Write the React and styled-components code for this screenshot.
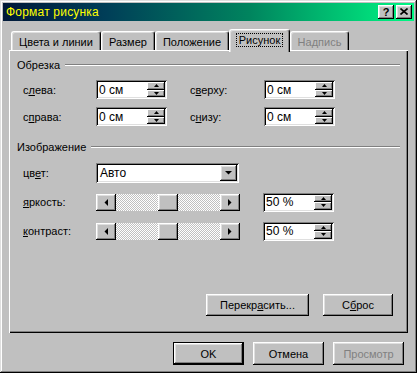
import React from "react";
import styled, { createGlobalStyle } from "styled-components";

const GlobalStyle = createGlobalStyle`
  html, body {
    margin: 0;
    padding: 0;
    background: #c0c0c0;
  }
  body {
    font-family: "Liberation Sans", Arial, sans-serif;
    font-size: 11px;
    color: #000;
  }
  * {
    box-sizing: border-box;
  }
`;

const raised = `
  background: #c0c0c0;
  box-shadow: inset -1px -1px #000, inset 1px 1px #fff, inset -2px -2px #808080, inset 2px 2px #dfdfdf;
`;

const sunken = `
  background: #fff;
  box-shadow: inset 1px 1px #808080, inset -1px -1px #fff, inset 2px 2px #000, inset -2px -2px #dfdfdf;
`;

const Window = styled.div`
  width: 417px;
  height: 373px;
  padding: 3px;
  display: flex;
  flex-direction: column;
  background: #c0c0c0;
  box-shadow: inset -1px -1px #000, inset 1px 1px #dfdfdf, inset -2px -2px #808080, inset 2px 2px #fff;
`;

const TitleBar = styled.div`
  height: 18px;
  display: flex;
  align-items: center;
  padding: 0 2px 0 3px;
  background: linear-gradient(90deg, #001838 0%, #003e58 25%, #00845e 60%, #00f884 100%);
`;

const TitleText = styled.div`
  flex: 1;
  color: #ffff00;
  font-size: 12px;
  line-height: 14px;
  letter-spacing: 0.2px;
`;

const TitleButtons = styled.div`
  display: flex;
  gap: 2px;
`;

const TitleButton = styled.div`
  ${raised}
  width: 16px;
  height: 14px;
  display: flex;
  align-items: center;
  justify-content: center;
  font-weight: bold;
  font-size: 11px;
  padding-bottom: 1px;
`;

const Body = styled.div`
  flex: 1;
  display: flex;
  flex-direction: column;
  padding: 0 6px;
`;

const TabRow = styled.div`
  margin-top: 8px;
  height: 21px;
  display: flex;
  align-items: flex-end;
  padding-left: 2px;
  position: relative;
  z-index: 1;
`;

const Tab = styled.div`
  width: ${(p) => p.$w}px;
  height: ${(p) => (p.$active ? 23 : 19)}px;
  margin-bottom: ${(p) => (p.$active ? -2 : 0)}px;
  padding-top: ${(p) => (p.$active ? 0 : 2)}px;
  padding-bottom: ${(p) => (p.$active ? 2 : 0)}px;
  display: flex;
  align-items: center;
  justify-content: center;
  background: #c0c0c0;
  border-top: 1px solid #fff;
  border-left: 1px solid #fff;
  border-right: 1px solid #000;
  border-radius: 3px 3px 0 0;
  box-shadow: inset -1px 0 #808080, inset 1px 1px #dfdfdf;
  color: ${(p) => (p.$disabled ? "#808080" : "#000")};
  white-space: nowrap;
`;

const Focus = styled.span`
  border: 1px dotted #000;
  padding: 0 2px;
  height: 14px;
  line-height: 12px;
`;

const Panel = styled.div`
  height: 283px;
  display: flex;
  flex-direction: column;
  padding: 8px 8px 17px 8px;
  background: #c0c0c0;
  box-shadow: inset 1px 1px #fff, inset -1px -1px #000, inset -2px -2px #808080;
`;

const GroupHeader = styled.div`
  height: 14px;
  display: flex;
  align-items: center;
  gap: 5px;
  margin-top: ${(p) => p.$top || 0}px;
`;

const GroupLine = styled.div`
  flex: 1;
  border-top: 1px solid #808080;
  border-bottom: 1px solid #fff;
`;

const CropGrid = styled.div`
  margin-top: 8px;
  padding-left: 6px;
  display: grid;
  grid-template-columns: 73px 71px 23px 74px 71px;
  grid-auto-rows: 19px;
  row-gap: 8px;
  align-items: center;
`;

const ImageGrid = styled.div`
  margin-top: 9px;
  padding-left: 6px;
  display: grid;
  grid-template-columns: 73px 144px 23px 71px;
  grid-auto-rows: 20px;
  row-gap: 9px;
  align-items: center;
`;

const Label = styled.div`
  grid-column: ${(p) => p.$col || "auto"};
  white-space: nowrap;
`;

const EditBox = styled.div`
  ${sunken}
  grid-column: ${(p) => p.$col || "auto"};
  height: ${(p) => p.$h || 19}px;
  display: flex;
  align-items: stretch;
  padding: 2px 2px 2px 3px;
`;

const EditText = styled.div`
  flex: 1;
  display: flex;
  align-items: center;
  font-size: 12px;
`;

const Spinner = styled.div`
  width: 18px;
  display: flex;
  flex-direction: column;
`;

const SpinButton = styled.div`
  flex: 1;
  background: #c0c0c0;
  box-shadow: inset -1px -1px #000, inset 1px 1px #fff, inset -2px -2px #808080;
  display: flex;
  align-items: center;
  justify-content: center;
`;

const Combo = styled.div`
  ${sunken}
  width: 143px;
  height: 20px;
  display: flex;
  padding: 2px;
`;

const ComboText = styled.div`
  flex: 1;
  display: flex;
  align-items: center;
  padding-left: 2px;
  font-size: 12px;
`;

const DropButton = styled.div`
  ${raised}
  width: 17px;
  display: flex;
  align-items: center;
  justify-content: center;
`;

const Slider = styled.div`
  width: 144px;
  height: 17px;
  display: flex;
`;

const ScrollButton = styled.div`
  ${raised}
  width: 20px;
  display: flex;
  align-items: center;
  justify-content: center;
`;

const Track = styled.div`
  flex: 1;
  display: flex;
  background-color: #c0c0c0;
  background-image: conic-gradient(#fff 25%, #c0c0c0 0 50%, #fff 0 75%, #c0c0c0 0);
  background-size: 2px 2px;
`;

const Thumb = styled.div`
  ${raised}
  width: 20px;
`;

const ActionRow = styled.div`
  margin-top: auto;
  display: flex;
  justify-content: flex-end;
  gap: 14px;
  padding-right: 7px;
`;

const Button = styled.div`
  ${raised}
  width: ${(p) => p.$w || 71}px;
  height: ${(p) => p.$h || 22}px;
  display: flex;
  align-items: center;
  justify-content: center;
  color: ${(p) => (p.$disabled ? "#808080" : "#000")};
  ${(p) =>
    p.$default &&
    `box-shadow: inset 0 0 0 1px #000, inset -2px -2px #000, inset 2px 2px #fff, inset -3px -3px #808080, inset 3px 3px #dfdfdf;`}
`;

const FooterRow = styled.div`
  margin-top: 9px;
  display: flex;
  justify-content: flex-end;
  gap: 9px;
  padding-right: 4px;
`;

function Arrow({ dir, size = "big" }) {
  const shapes = {
    up: { w: 7, h: 4, pts: "0,4 7,4 3.5,0.5" },
    down: { w: 7, h: 4, pts: "0,0 7,0 3.5,3.5" },
    left: { w: 4, h: 7, pts: "4,0 4,7 0.5,3.5" },
    right: { w: 4, h: 7, pts: "0,0 0,7 3.5,3.5" },
  };
  const small = {
    up: { w: 5, h: 3, pts: "0,3 5,3 2.5,0" },
    down: { w: 5, h: 3, pts: "0,0 5,0 2.5,3" },
  };
  const s = size === "small" ? small[dir] : shapes[dir];
  return (
    <svg width={s.w} height={s.h} viewBox={`0 0 ${s.w} ${s.h}`}>
      <polygon points={s.pts} fill="#000" />
    </svg>
  );
}

function SpinEdit({ value, col }) {
  return (
    <EditBox $col={col}>
      <EditText>{value}</EditText>
      <Spinner>
        <SpinButton>
          <Arrow dir="up" size="small" />
        </SpinButton>
        <SpinButton>
          <Arrow dir="down" size="small" />
        </SpinButton>
      </Spinner>
    </EditBox>
  );
}

function ScrollSlider({ value }) {
  return (
    <Slider>
      <ScrollButton>
        <Arrow dir="left" />
      </ScrollButton>
      <Track>
        <div style={{ flex: value }} />
        <Thumb />
        <div style={{ flex: 100 - value }} />
      </Track>
      <ScrollButton>
        <Arrow dir="right" />
      </ScrollButton>
    </Slider>
  );
}

const tabs = [
  { label: "Цвета и линии", w: 90 },
  { label: "Размер", w: 54 },
  { label: "Положение", w: 74 },
  { label: "Рисунок", w: 61, active: true },
  { label: "Надпись", w: 59, disabled: true },
];

export default function App() {
  return (
    <>
      <GlobalStyle />
      <Window>
        <TitleBar>
          <TitleText>Формат рисунка</TitleText>
          <TitleButtons>
            <TitleButton>?</TitleButton>
            <TitleButton>
              <svg width="8" height="7" viewBox="0 0 8 7">
                <path d="M0.5 0.5 L7.5 6.5 M7.5 0.5 L0.5 6.5" stroke="#000" strokeWidth="1.6" />
              </svg>
            </TitleButton>
          </TitleButtons>
        </TitleBar>
        <Body>
          <TabRow>
            {tabs.map((t) => (
              <Tab key={t.label} $w={t.w} $active={t.active} $disabled={t.disabled}>
                {t.active ? <Focus>{t.label}</Focus> : t.label}
              </Tab>
            ))}
          </TabRow>
          <Panel>
            <GroupHeader>
              Обрезка
              <GroupLine />
            </GroupHeader>
            <CropGrid>
              <Label>
                с<u>л</u>ева:
              </Label>
              <SpinEdit value="0 см" />
              <Label $col="4">
                с<u>в</u>ерху:
              </Label>
              <SpinEdit value="0 см" />
              <Label>
                с<u>п</u>рава:
              </Label>
              <SpinEdit value="0 см" />
              <Label $col="4">
                с<u>н</u>изу:
              </Label>
              <SpinEdit value="0 см" />
            </CropGrid>
            <GroupHeader $top={14}>
              Изображение
              <GroupLine />
            </GroupHeader>
            <ImageGrid>
              <Label>
                цв<u>е</u>т:
              </Label>
              <Combo>
                <ComboText>Авто</ComboText>
                <DropButton>
                  <Arrow dir="down" />
                </DropButton>
              </Combo>
              <div />
              <div />
              <Label>
                <u>я</u>ркость:
              </Label>
              <ScrollSlider value={50} />
              <div />
              <SpinEdit value="50 %" />
              <Label>
                <u>к</u>онтраст:
              </Label>
              <ScrollSlider value={50} />
              <div />
              <SpinEdit value="50 %" />
            </ImageGrid>
            <ActionRow>
              <Button $w={103}>
                Перекр<u>а</u>сить...
              </Button>
              <Button $w={70}>
                С<u>б</u>рос
              </Button>
            </ActionRow>
          </Panel>
          <FooterRow>
            <Button $default $h={23}>OK</Button>
            <Button $h={23}>Отмена</Button>
            <Button $h={23} $disabled>
              Просмотр
            </Button>
          </FooterRow>
        </Body>
      </Window>
    </>
  );
}
